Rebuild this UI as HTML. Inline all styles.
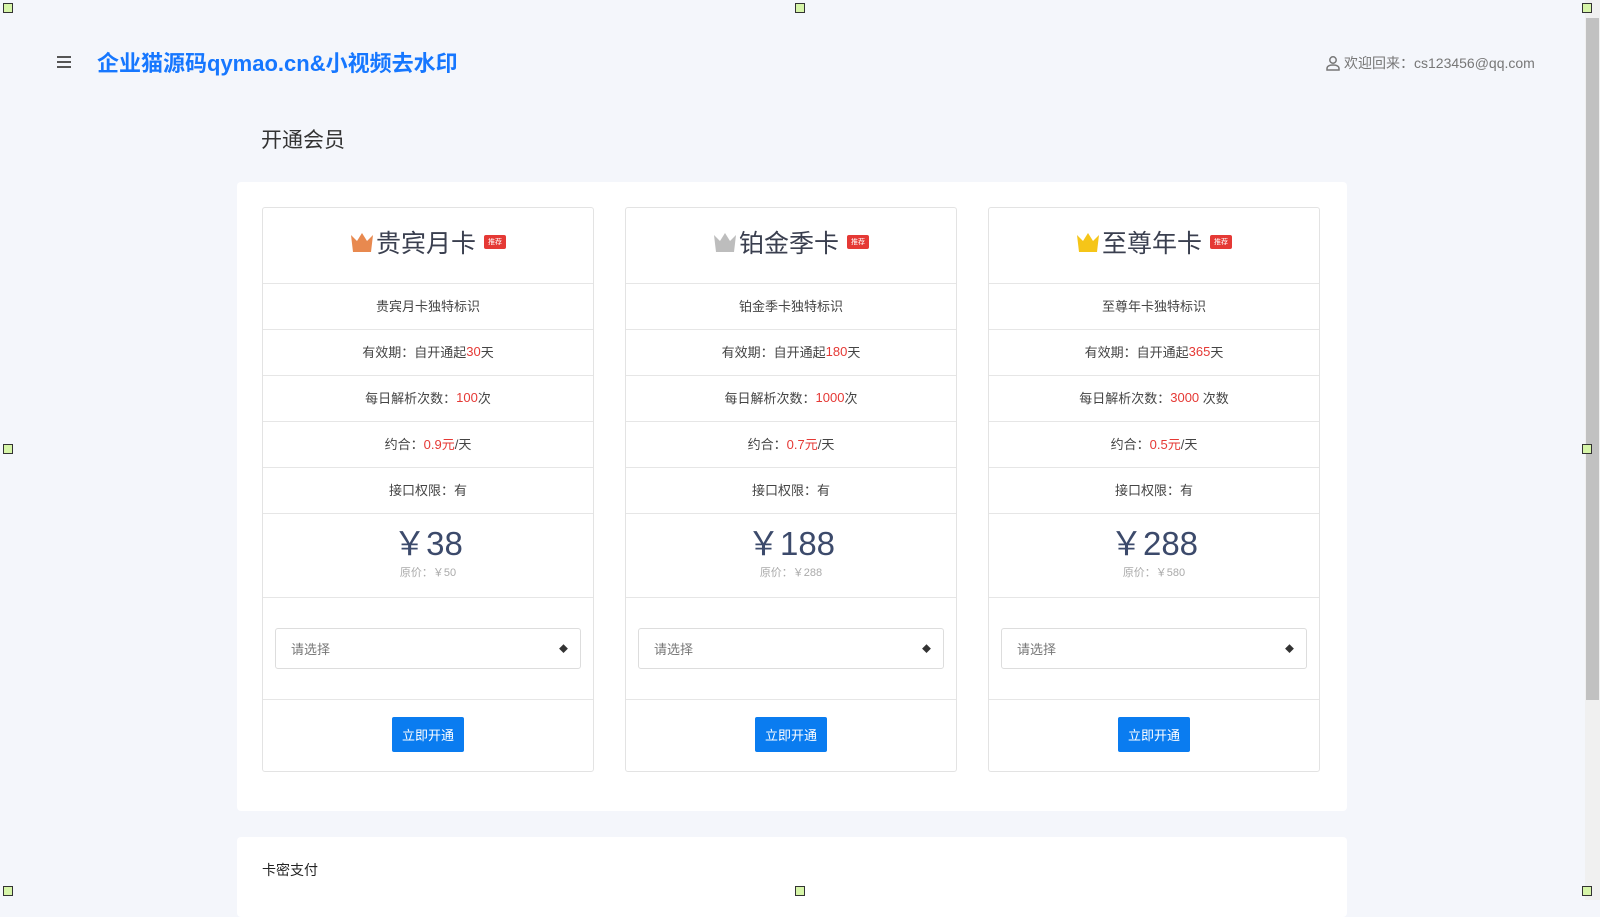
<!DOCTYPE html>
<html><head><meta charset="utf-8"><style>
*{box-sizing:border-box;margin:0;padding:0}
body{width:1600px;height:900px;overflow:hidden;background:#f4f6fb;font-family:"Liberation Sans","Noto Sans CJK SC",sans-serif;color:#333;position:relative}
.hdr{position:absolute;left:57px;top:46px;display:flex;align-items:center}
.ham{width:14px;margin-right:26px}
.ham i{display:block;height:2px;background:#555;margin:3px 0}
.title{font-size:22px;font-weight:bold;color:#1677ff}
.user{position:absolute;left:1325px;top:53px;font-size:14px;color:#777;display:flex;align-items:center}
h2{position:absolute;left:261px;top:124px;font-size:21px;font-weight:normal;color:#333}
.panel{position:absolute;left:237px;top:182px;width:1110px;height:629px;background:#fff;border-radius:4px}
.panel2{position:absolute;left:237px;top:837px;width:1110px;height:80px;background:#fff;border-radius:4px;padding:23px 0 0 25px;font-size:14px;color:#222}
.card{position:absolute;top:25px;width:332px;height:565px;border:1px solid #e3e3e3;border-radius:3px}
.row{border-bottom:1px solid #e6e6e6;display:flex;align-items:center;justify-content:center;font-size:13px;color:#444}
.r0{height:76px;font-size:25px;color:#3a3f4f;padding-bottom:8px}
.r{height:46px;padding-bottom:3px}
.price{height:84px;flex-direction:column;padding-bottom:6px}
.price b{font-size:33px;font-weight:normal;color:#3c4a6b;line-height:36px}
.price s{text-decoration:none;font-size:11px;color:#aaa;margin-top:2px}
.sel{height:102px}
.sel div{width:306px;height:41px;border:1px solid #ddd;border-radius:3px;display:flex;align-items:center;justify-content:space-between;padding:0 12px 0 15px;font-size:13px;color:#777}
.btnr{height:72px;border:none;padding-bottom:4px}
.btn{background:#0a7cf0;color:#fff;font-size:13px;padding:8px 10px;border-radius:2px}
.red{color:#e53935}
.tag{background:#e53935;color:#fff;font-size:7px;padding:2px 4px;margin-left:8px;border-radius:2px;position:relative}
.crown{margin-right:2px}
.mk{position:absolute;width:10px;height:10px;border:1px solid #333;background:#d6f5a8}
.sb{position:absolute;right:0;top:0;width:15px;height:900px;background:#f0f0f0}
.sb i{position:absolute;left:1px;top:18px;width:13px;height:682px;background:#c1c1c1}
</style></head><body>
<div class="hdr"><div class="ham"><i></i><i></i><i></i></div><div class="title">企业猫源码qymao.cn&amp;小视频去水印</div></div>
<div class="user"><svg width="16" height="16" viewBox="0 0 16 16" style="margin-right:3px"><circle cx="8" cy="5" r="3.2" fill="none" stroke="#777" stroke-width="1.5"/><path d="M2 15v-1.5c0-2 2-3.5 6-3.5s6 1.5 6 3.5V15z" fill="none" stroke="#777" stroke-width="1.5"/></svg>欢迎回来：cs123456@qq.com</div>
<h2>开通会员</h2>
<div class="panel">
<div class="card" style="left:25px">
<div class="row r0"><svg class="crown" width="24" height="20" viewBox="0 0 24 20"><path d="M1 3l6 6 5-8 5 8 6-6-2 17H3z" fill="#e8894f"/></svg>贵宾月卡<span class="tag">推荐</span></div>
<div class="row r">贵宾月卡独特标识</div>
<div class="row r">有效期：自开通起<span class="red">30</span>天</div>
<div class="row r">每日解析次数：<span class="red">100</span>次</div>
<div class="row r">约合：<span class="red">0.9元</span>/天</div>
<div class="row r">接口权限：有</div>
<div class="row price"><b>￥38</b><s>原价：￥50</s></div>
<div class="row sel"><div>请选择<span style="font-size:9px;color:#333">◆</span></div></div>
<div class="row btnr"><span class="btn">立即开通</span></div>
</div>
<div class="card" style="left:388px">
<div class="row r0"><svg class="crown" width="24" height="20" viewBox="0 0 24 20"><path d="M1 3l6 6 5-8 5 8 6-6-2 17H3z" fill="#bdbdbd"/></svg>铂金季卡<span class="tag">推荐</span></div>
<div class="row r">铂金季卡独特标识</div>
<div class="row r">有效期：自开通起<span class="red">180</span>天</div>
<div class="row r">每日解析次数：<span class="red">1000</span>次</div>
<div class="row r">约合：<span class="red">0.7元</span>/天</div>
<div class="row r">接口权限：有</div>
<div class="row price"><b>￥188</b><s>原价：￥288</s></div>
<div class="row sel"><div>请选择<span style="font-size:9px;color:#333">◆</span></div></div>
<div class="row btnr"><span class="btn">立即开通</span></div>
</div>
<div class="card" style="left:751px">
<div class="row r0"><svg class="crown" width="24" height="20" viewBox="0 0 24 20"><path d="M1 3l6 6 5-8 5 8 6-6-2 17H3z" fill="#f5c518"/></svg>至尊年卡<span class="tag">推荐</span></div>
<div class="row r">至尊年卡独特标识</div>
<div class="row r">有效期：自开通起<span class="red">365</span>天</div>
<div class="row r">每日解析次数：<span class="red">3000</span>&nbsp;次数</div>
<div class="row r">约合：<span class="red">0.5元</span>/天</div>
<div class="row r">接口权限：有</div>
<div class="row price"><b>￥288</b><s>原价：￥580</s></div>
<div class="row sel"><div>请选择<span style="font-size:9px;color:#333">◆</span></div></div>
<div class="row btnr"><span class="btn">立即开通</span></div>
</div>
</div>
<div class="panel2">卡密支付</div>
<div class="sb"><i></i></div>
<div class="mk" style="left:3px;top:3px"></div><div class="mk" style="left:795px;top:3px"></div><div class="mk" style="left:1582px;top:3px"></div>
<div class="mk" style="left:3px;top:444px"></div><div class="mk" style="left:1582px;top:444px"></div>
<div class="mk" style="left:3px;top:886px"></div><div class="mk" style="left:795px;top:886px"></div><div class="mk" style="left:1582px;top:886px"></div>
</body></html>
